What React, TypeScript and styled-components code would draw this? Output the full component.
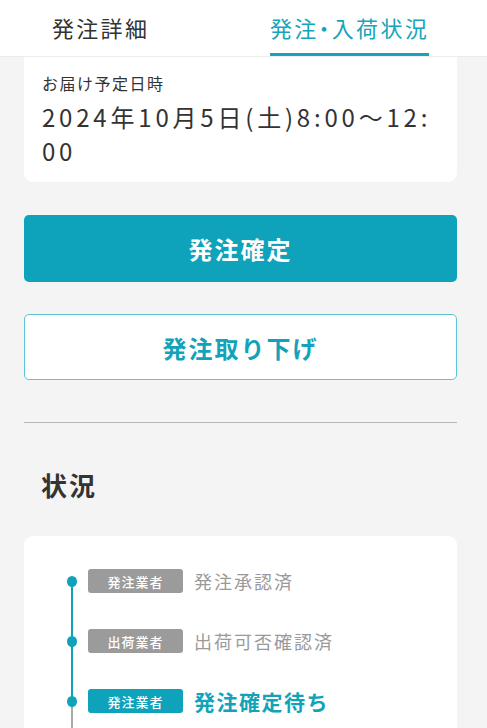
import React from 'react'
import styled, { createGlobalStyle } from 'styled-components'

const TEAL = '#0ea3ba'

const GlobalStyle = createGlobalStyle`
  html, body {
    margin: 0;
    padding: 0;
    background: #f4f4f4;
  }
  body {
    font-family: "Noto Sans CJK JP", "Noto Sans", sans-serif;
    color: #333;
  }
  * {
    box-sizing: border-box;
  }
`

const Screen = styled.div`
  min-height: 100vh;
  background: #f4f4f4;
  overflow: hidden;
`

const TabBar = styled.nav`
  display: flex;
  justify-content: space-between;
  height: 57px;
  padding: 0 58px 0 52px;
  background: #fff;
  border-bottom: 1px solid #ececec;
`

const Tab = styled.div<{ $active?: boolean }>`
  display: flex;
  align-items: center;
  height: 56px;
  padding-top: 1px;
  font-size: 22px;
  letter-spacing: 2.3px;
  line-height: 28px;
  font-feature-settings: "palt";
  color: ${({ $active }) => ($active ? '#14a5ba' : '#333')};
  border-bottom: 3px solid ${({ $active }) => ($active ? '#14a5ba' : 'transparent')};
`

const Content = styled.main`
  padding: 0 30px 0 24px;
`

const DeliveryCard = styled.section`
  background: #fff;
  border-radius: 0 0 9px 9px;
  padding: 14px 18px 14px;
`

const Label = styled.div`
  font-size: 16px;
  line-height: 24px;
  letter-spacing: 1.5px;
  color: #333;
`

const DateText = styled.div`
  margin-top: 5px;
  font-size: 24px;
  line-height: 34px;
  letter-spacing: 3.8px;
  word-break: break-all;
  color: #333;
`

const Actions = styled.div`
  display: flex;
  flex-direction: column;
  gap: 32px;
  margin-top: 33px;
`

const Button = styled.button<{ $variant: 'primary' | 'outline' }>`
  display: flex;
  align-items: center;
  justify-content: center;
  width: 100%;
  height: ${({ $variant }) => ($variant === 'primary' ? '67px' : '66px')};
  border-radius: 5px;
  font-family: inherit;
  font-size: 24px;
  font-weight: 700;
  letter-spacing: 2px;
  cursor: pointer;
  background: ${({ $variant }) => ($variant === 'primary' ? TEAL : '#fff')};
  color: ${({ $variant }) => ($variant === 'primary' ? '#fff' : '#12a3b9')};
  border: ${({ $variant }) => ($variant === 'primary' ? 'none' : '1px solid #5ec4d3')};
`

const Divider = styled.hr`
  margin: 42px 0 0;
  border: none;
  border-top: 1px solid #b8b8b8;
`

const SectionTitle = styled.h2`
  margin: 42px 0 0;
  padding-left: 17px;
  font-size: 26px;
  line-height: 40px;
  font-weight: 700;
  letter-spacing: 2px;
  color: #333;
`

const TimelineCard = styled.section`
  margin-top: 31px;
  background: #fff;
  border-radius: 9px 9px 0 0;
  padding: 15px 0 40px 43px;
`

const Step = styled.div`
  display: flex;
  align-items: center;
  height: 60px;
`

const Rail = styled.div<{ $line: string }>`
  position: relative;
  align-self: stretch;
  display: flex;
  align-items: center;
  width: 10px;
  margin-right: 11px;

  &::before {
    content: '';
    position: absolute;
    left: 4px;
    top: 50%;
    width: 2px;
    height: 100%;
    background: ${({ $line }) => $line};
  }
`

const Dot = styled.span`
  position: relative;
  z-index: 1;
  width: 11px;
  height: 11px;
  margin-left: -0.5px;
  border-radius: 50%;
  background: ${TEAL};
`

const Badge = styled.span<{ $current?: boolean }>`
  display: flex;
  align-items: center;
  justify-content: center;
  width: 95px;
  height: 24px;
  margin-right: 11px;
  border-radius: 3px;
  font-size: 13px;
  font-weight: 500;
  letter-spacing: 1px;
  color: #fff;
  background: ${({ $current }) => ($current ? TEAL : '#9b9b9b')};
`

const StepText = styled.span<{ $current?: boolean }>`
  font-size: ${({ $current }) => ($current ? '21px' : '18px')};
  font-weight: ${({ $current }) => ($current ? 700 : 400)};
  letter-spacing: ${({ $current }) => ($current ? '1.5px' : '2px')};
  color: ${({ $current }) => ($current ? '#12a3b9' : '#9a9a9a')};
`

type StepItem = {
  actor: string
  label: string
  state: 'done' | 'current' | 'todo'
}

const steps: StepItem[] = [
  { actor: '発注業者', label: '発注承認済', state: 'done' },
  { actor: '出荷業者', label: '出荷可否確認済', state: 'done' },
  { actor: '発注業者', label: '発注確定待ち', state: 'current' },
  { actor: '出荷業者', label: '出荷待ち', state: 'todo' },
]

const App: React.FC = () => {
  return (
    <Screen>
      <GlobalStyle />
      <TabBar>
        <Tab>発注詳細</Tab>
        <Tab $active>発注・入荷状況</Tab>
      </TabBar>
      <Content>
        <DeliveryCard>
          <Label>お届け予定日時</Label>
          <DateText>2024年10月5日(土)8:00～12:00</DateText>
        </DeliveryCard>

        <Actions>
          <Button $variant="primary">発注確定</Button>
          <Button $variant="outline">発注取り下げ</Button>
        </Actions>

        <Divider />

        <SectionTitle>状況</SectionTitle>

        <TimelineCard>
          {steps.map((s, i) => (
            <Step key={i}>
              <Rail $line={s.state === 'done' ? TEAL : '#aaa'}>
                <Dot />
              </Rail>
              <Badge $current={s.state === 'current'}>{s.actor}</Badge>
              <StepText $current={s.state === 'current'}>{s.label}</StepText>
            </Step>
          ))}
        </TimelineCard>
      </Content>
    </Screen>
  )
}

export default App
